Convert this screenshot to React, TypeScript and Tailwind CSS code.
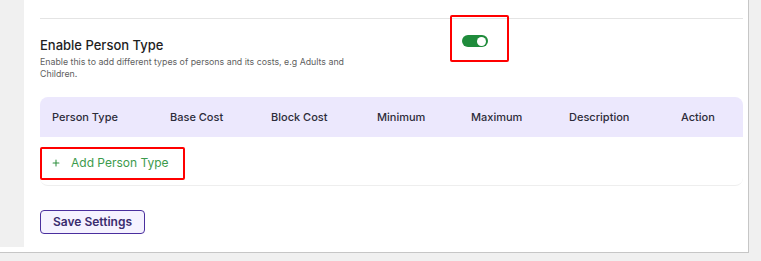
import React from 'react';
import { Plus } from 'lucide-react';

const columns = ['Person Type', 'Base Cost', 'Block Cost', 'Minimum', 'Maximum', 'Description', 'Action'];

function Toggle() {
  return (
    <div className="w-[26px] h-[12px] rounded-full bg-[#1f8b3b] flex items-center justify-end pr-[2px]">
      <div className="w-[9px] h-[9px] rounded-full bg-white" />
    </div>
  );
}

export default function App() {
  return (
    <div className="w-[761px] h-[261px] bg-[#f0f0f0] font-['Inter',sans-serif]">
      <div className="w-[749px] bg-white border-r border-b border-[#c6c6c6]">
        <div className="flex">
          <div className="w-[24px] bg-[#f0f0f0]" />
          <div className="relative flex-1 h-[247px] pl-[16px] pr-[5px] pt-[18px]">
            <div className="border-t border-[#e4e4e4]" />

            {/* toggle with annotation box */}
            <div className="absolute left-[426px] top-[15px] w-[59px] h-[47px] border-2 border-[#ff0000] rounded-[2px] flex items-center pl-[10px] pt-[5px]">
              <Toggle />
            </div>

            <div className="mt-[18px] w-[320px]">
              <div className="text-[13px] leading-[16px] font-medium text-[#1e1e1e]">Enable Person Type</div>
              <div className="mt-[3px] text-[8.8px] leading-[12px] text-[#5f5f5f]">
                Enable this to add different types of persons and its costs, e.g Adults and Children.
              </div>
            </div>

            <div className="mt-[17px]">
              <div className="grid grid-cols-[118px_101px_106px_94px_98px_112px_74px] h-[40px] items-center bg-[#ece8fd] rounded-t-[8px]">
                {columns.map((c) => (
                  <div key={c} className="px-[12px] text-[11px] font-medium text-[#2c2c3a] whitespace-nowrap">
                    {c}
                  </div>
                ))}
              </div>
              <div className="h-[49px] border-b border-[#eeeeee] rounded-b-[8px] pt-[10px]">
                <div className="w-[145px] h-[33px] border-2 border-[#ff0000] rounded-[2px] flex items-center pl-[9px] pb-[2px] gap-[10px] text-[#3c9a4c]">
                  <Plus className="w-[10px] h-[10px] text-[#2f8f3f]" strokeWidth={2.5} />
                  <span className="text-[12px] leading-none">Add Person Type</span>
                </div>
              </div>
            </div>

            <button className="mt-[24px] h-[24px] w-[105px] border border-[#4a2f9e] bg-[#f5f2ff] rounded-[4px] text-[12px] font-semibold text-[#3a2c6e]">
              Save Settings
            </button>
          </div>
        </div>
        <div className="h-[5px]" />
      </div>
    </div>
  );
}
